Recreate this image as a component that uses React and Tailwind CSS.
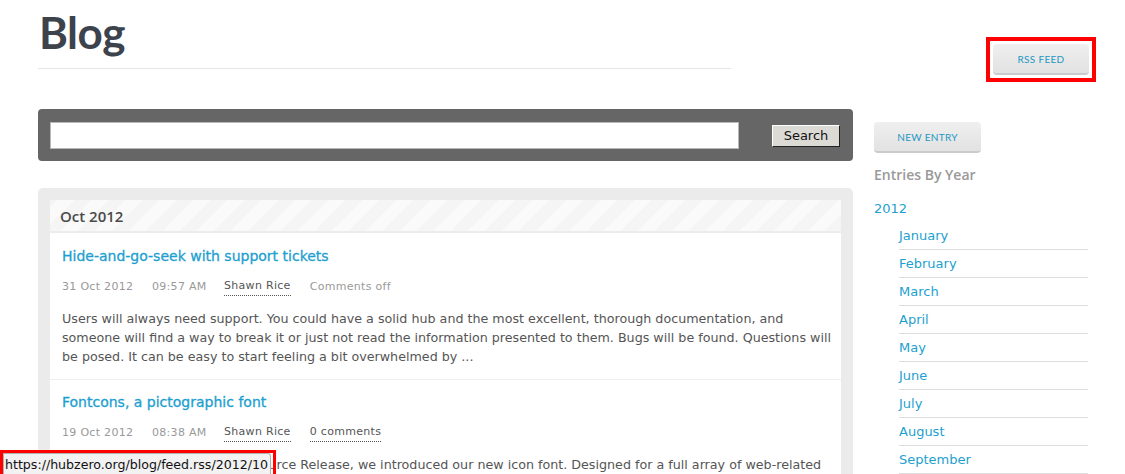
import React from "react";

const months = [
  "January",
  "February",
  "March",
  "April",
  "May",
  "June",
  "July",
  "August",
  "September",
  "October",
];

const entries = [
  {
    title: "Hide-and-go-seek with support tickets",
    date: "31 Oct 2012",
    time: "09:57 AM",
    author: "Shawn Rice",
    comments: "Comments off",
    link: false,
    lines: [
      "Users will always need support. You could have a solid hub and the most excellent, thorough documentation, and",
      "someone will find a way to break it or just not read the information presented to them. Bugs will be found. Questions will",
      "be posed. It can be easy to start feeling a bit overwhelmed by ...",
    ],
  },
  {
    title: "Fontcons, a pictographic font",
    date: "19 Oct 2012",
    time: "08:38 AM",
    author: "Shawn Rice",
    comments: "0 comments",
    link: true,
    lines: [
      "With the HUBzero 1.1.0 Open Source Release, we introduced our new icon font. Designed for a full array of web-related",
      "actions and symbols, it lets us style icons with plain CSS instead of images ...",
    ],
  },
];

function GrayButton({ children, className = "" }) {
  return (
    <button
      className={`rounded-[4px] border-b-2 border-[#c9cbcc] bg-linear-to-b from-[#efefef] to-[#e2e2e2] font-['Lato',sans-serif] text-[10px] uppercase tracking-[0.3px] text-[#1f97c4] ${className}`}
    >
      {children}
    </button>
  );
}

export default function App() {
  return (
    <div className="relative h-[474px] overflow-hidden bg-white font-['DejaVu_Sans',sans-serif]">
      {/* header */}
      <div className="flex pl-[38px] pt-[10px]">
        <div className="h-[59px] w-[693px] border-b border-[#e5e5e5]">
          <h1 className="pl-[1px] font-['Lato',sans-serif] text-[44px] font-bold leading-[44px] tracking-[-0.5px] text-[#3d434c]">
            Blog
          </h1>
        </div>
        <div className="ml-[255px] mt-[27px] h-[45px] w-[110px] border-4 border-[#ff0000] p-[3px]">
          <GrayButton className="h-[31px] w-[96px] leading-[28px]">RSS Feed</GrayButton>
        </div>
      </div>

      <div className="mt-[27px] flex gap-[21px] pl-[38px]">
        {/* main column */}
        <div className="w-[815px]">
          <div className="flex h-[52px] items-start justify-between rounded-[4px] bg-[#666666] px-[12px] pt-[13px]">
            <input className="h-[27px] w-[689px] border border-[#b8b8b8] bg-white" />
            <button className="mr-[1px] mt-[3px] h-[22px] w-[68px] border border-b-[#222] border-l-[#fff] border-r-[#222] border-t-[#fff] bg-[#dcdad5] text-[13px] leading-[18px] text-[#111]">
              Search
            </button>
          </div>

          <div className="mt-[27px] rounded-t-[5px] bg-[#ebebeb] px-[12px] pt-[12px]">
            <div className="bg-white">
              <div className="h-[33px] border-b-2 border-[#ececec] bg-[repeating-linear-gradient(-45deg,#f5f5f5_0px,#f5f5f5_12px,#fafafa_12px,#fafafa_24px)] pl-[10px] font-['Open_Sans',sans-serif] text-[15px] font-semibold leading-[32px] text-[#4a4a4a]">
                Oct 2012
              </div>
              {entries.map((e, i) => (
                <div
                  key={i}
                  className={`border-b border-[#eeeeee] px-[12px] pb-[13px] ${
                    i === 0 ? "pt-[13px]" : "pt-[12px]"
                  }`}
                >
                  <h3 className="text-[14px] leading-[20px] text-[#1d9fcf] [-webkit-text-stroke:0.3px_#1d9fcf]">
                    {e.title}
                  </h3>
                  <div className="mt-[12px] flex text-[11px] leading-[18px] tracking-[0.3px] text-[#999999]">
                    <span className="w-[90px]">{e.date}</span>
                    <span className="w-[72px]">{e.time}</span>
                    <span className="mr-[19px] border-b border-dotted border-[#555] leading-[15px] text-[#555555]">
                      {e.author}
                    </span>
                    <span
                      className={
                        e.link
                          ? "border-b border-dotted border-[#555] leading-[15px] text-[#555555]"
                          : ""
                      }
                    >
                      {e.comments}
                    </span>
                  </div>
                  <p className="mt-[13px] text-[12.7px] leading-[19px] text-[#555555]">
                    {e.lines.map((l, j) => (
                      <span key={j} className="block whitespace-nowrap">
                        {l}
                      </span>
                    ))}
                  </p>
                </div>
              ))}
            </div>
          </div>
        </div>

        {/* sidebar */}
        <div className="w-[214px] pt-[13px]">
          <GrayButton className="h-[31px] w-[107px] leading-[28px]">New Entry</GrayButton>
          <h4 className="mt-[12px] font-['Open_Sans',sans-serif] text-[14px] font-semibold leading-[20px] text-[#999999]">
            Entries By Year
          </h4>
          <div className="mt-[14px] text-[13px] leading-[20px] text-[#1d9fcf]">2012</div>
          <ul className="ml-[25px] mt-[3px] w-[189px]">
            {months.map((m) => (
              <li
                key={m}
                className="h-[28px] border-b border-[#dddddd] text-[13px] leading-[27px] text-[#1d9fcf]"
              >
                {m}
              </li>
            ))}
          </ul>
        </div>
      </div>

      {/* status bar overlay */}
      <div className="absolute bottom-0 left-0 h-[24px] w-[276px] border-[3px] border-b-0 border-[#ff0000]">
        <div className="h-full w-[268px] rounded-tr-[3px] border border-b-0 border-[#b0b0b0] bg-[#f2f2f2] pl-[1px] text-[12.6px] leading-[21px] text-[#111]">
          https://hubzero.org/blog/feed.rss/2012/10
        </div>
      </div>
    </div>
  );
}
